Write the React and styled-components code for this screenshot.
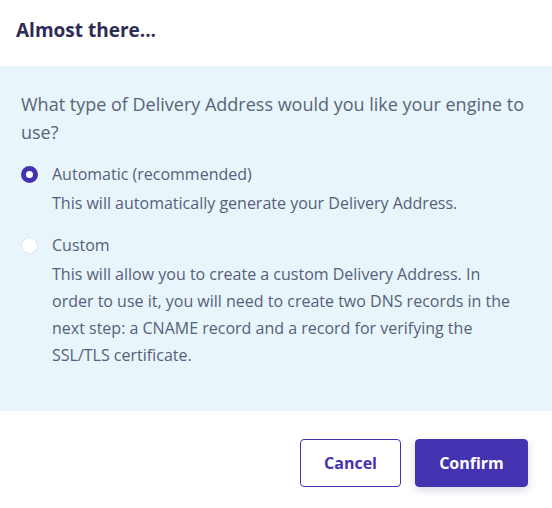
import React, { useState } from "react";
import styled, { createGlobalStyle } from "styled-components";

const GlobalStyle = createGlobalStyle`
  body {
    margin: 0;
    background: #fff;
    font-family: "Open Sans", "Liberation Sans", sans-serif;
  }
`;

const Dialog = styled.div`
  width: 552px;
  height: 508px;
  display: flex;
  flex-direction: column;
  background: #fff;
`;

const Header = styled.div`
  height: 66px;
  display: flex;
  align-items: center;
  padding: 0 16px;
  box-sizing: border-box;
`;

const Title = styled.h2`
  margin: 0;
  font-size: 19px;
  font-weight: 700;
  color: #2e2b55;
  padding-bottom: 6px;
`;

const Body = styled.div`
  background: #e8f5fa;
  height: 345px;
  padding: 24px 21px 0 21px;
  box-sizing: border-box;
`;

const Question = styled.p`
  margin: 0 0 15px;
  font-size: 18px;
  line-height: 28px;
  color: #5a6479;
`;

const Option = styled.label`
  display: flex;
  gap: 14px;
  margin-bottom: 15px;
  cursor: pointer;
`;

const Radio = styled.span`
  flex: none;
  width: 17px;
  height: 17px;
  margin-top: 5px;
  border-radius: 50%;
  box-sizing: border-box;
  background: #fff;
  border: ${(p) => (p.$checked ? "5.5px solid #4433b0" : "1px solid #dfe3e8")};
`;

const OptionText = styled.div`
  display: flex;
  flex-direction: column;
  padding-right: 10px;
`;

const OptionLabel = styled.span`
  font-size: 16px;
  line-height: 27px;
  color: #56607a;
`;

const OptionDesc = styled.span`
  font-size: 16px;
  line-height: 27px;
  color: #56607a;
  margin-top: 2px;
`;

const Footer = styled.div`
  flex: 1;
  display: flex;
  justify-content: flex-end;
  align-items: flex-start;
  gap: 14px;
  padding: 28px 24px 0 0;
`;

const Button = styled.button`
  height: 48px;
  padding: 0 23px;
  min-width: ${(p) => (p.$primary ? "113px" : "101px")};
  border-radius: 4px;
  font-family: "Open Sans", "Liberation Sans", sans-serif;
  font-size: 16px;
  font-weight: 700;
  cursor: pointer;
  border: 1px solid #4433b0;
  background: ${(p) => (p.$primary ? "#4433b0" : "#fff")};
  color: ${(p) => (p.$primary ? "#fff" : "#4433b0")};
  box-shadow: ${(p) => (p.$primary ? "0 3px 8px rgba(40, 30, 90, 0.18)" : "none")};
`;

const options = [
  {
    id: "auto",
    label: "Automatic (recommended)",
    desc: "This will automatically generate your Delivery Address.",
  },
  {
    id: "custom",
    label: "Custom",
    desc:
      "This will allow you to create a custom Delivery Address. In order to use it, you will need to create two DNS records in the next step: a CNAME record and a record for verifying the SSL/TLS certificate.",
  },
];

const App = () => {
  const [selected, setSelected] = useState("auto");
  return (
    <>
      <GlobalStyle />
      <Dialog>
        <Header>
          <Title>Almost there...</Title>
        </Header>
        <Body>
          <Question>
            What type of Delivery Address would you like your engine to use?
          </Question>
          {options.map((o) => (
            <Option key={o.id} onClick={() => setSelected(o.id)}>
              <Radio $checked={selected === o.id} />
              <OptionText>
                <OptionLabel>{o.label}</OptionLabel>
                <OptionDesc>{o.desc}</OptionDesc>
              </OptionText>
            </Option>
          ))}
        </Body>
        <Footer>
          <Button>Cancel</Button>
          <Button $primary>Confirm</Button>
        </Footer>
      </Dialog>
    </>
  );
};

export default App;
